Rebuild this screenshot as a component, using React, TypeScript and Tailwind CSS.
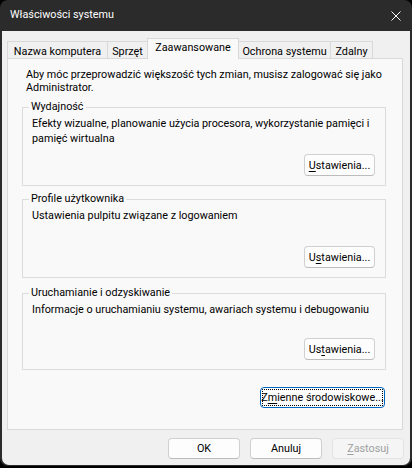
import React from 'react';

const tabs = [
  { label: 'Nazwa komputera', width: 'w-[101px]' },
  { label: 'Sprzęt', width: 'w-[41px]' },
  { label: 'Zaawansowane', width: 'w-[92px]', active: true },
  { label: 'Ochrona systemu', width: 'w-[93px]' },
  { label: 'Zdalny', width: 'w-[43px]' },
];

const Mn: React.FC<{ children: React.ReactNode }> = ({ children }) => (
  <span className="underline decoration-1 underline-offset-[2px]">{children}</span>
);

const WinButton: React.FC<{
  children: React.ReactNode;
  className?: string;
  disabled?: boolean;
  focused?: boolean;
}> = ({ children, className = '', disabled, focused }) => {
  let look = 'bg-[#fdfdfd] border-[#d0d0d0] border-b-[#bcbcbc] text-black';
  if (disabled) look = 'bg-[#f5f5f5] border-[#e3e3e3] text-[#a0a0a0]';
  if (focused) look = 'bg-[#fdfdfd] border-[#0067c0] text-black';
  return (
    <button
      className={`flex items-center justify-center whitespace-nowrap rounded-[4px] border text-[10.8px] leading-[13px] ${look} ${className}`}
    >
      {focused ? (
        <span className="flex h-full w-full items-center justify-center rounded-[2px] outline outline-1 outline-dotted outline-black -outline-offset-[2px]">
          {children}
        </span>
      ) : (
        children
      )}
    </button>
  );
};

const GroupBox: React.FC<{
  title: string;
  height: string;
  className?: string;
  children: React.ReactNode;
  button: React.ReactNode;
}> = ({ title, height, className = '', children, button }) => (
  <div className={`flex flex-col border border-[#dcdcdc] ${height} ${className}`}>
    <span className="-mt-[8px] ml-[6px] w-fit whitespace-nowrap bg-[#f9f9f9] px-[2px] leading-[13px]">{title}</span>
    <div className="mt-[3px] whitespace-nowrap pl-[9px] leading-[15px]">{children}</div>
    <WinButton className="mb-[9px] mr-[10px] mt-auto h-[22px] w-[71px] self-end">{button}</WinButton>
  </div>
);

export default function App() {
  return (
    <div className="h-[468px] w-[412px] overflow-hidden bg-black font-['Roboto','Liberation_Sans',sans-serif] text-[10.8px] text-black">
      <div className="flex h-[466px] w-[412px] flex-col overflow-hidden rounded-[8px] bg-[#2b2b2b] px-[2px] pb-px">
        {/* title bar */}
        <div className="flex h-[31px] shrink-0 items-center justify-between pl-[8px] pr-[9px]">
          <span className="text-white">Właściwości systemu</span>
          <svg width="10" height="10" viewBox="0 0 10 10">
            <path d="M0.5 0.5 L9.5 9.5 M9.5 0.5 L0.5 9.5" stroke="#ffffff" strokeWidth="1" />
          </svg>
        </div>

        <div className="flex flex-1 flex-col rounded-b-[7px] bg-[#f0f0f0] px-[5px] pt-[7px]">
          {/* tabs */}
          <div className="flex h-[20px] items-end">
            {tabs.map((tab, i) =>
              tab.active ? (
                <div
                  key={tab.label}
                  className={`relative z-10 -mb-px -ml-px h-[21px] whitespace-nowrap border border-b-0 border-[#d9d9d9] bg-[#f9f9f9] pt-[2px] text-center leading-[13px] ${tab.width}`}
                >
                  {tab.label}
                </div>
              ) : (
                <div
                  key={tab.label}
                  className={`h-[17px] whitespace-nowrap border border-b-0 border-[#d9d9d9] bg-[#f0f0f0] pt-[3px] text-center leading-[13px] ${i > 0 ? '-ml-px' : ''} ${tab.width}`}
                >
                  {tab.label}
                </div>
              )
            )}
          </div>

          {/* tab page */}
          <div className="flex h-[372px] w-[396px] flex-col border border-[#d9d9d9] bg-[#f9f9f9] pl-[14px] pr-[16px]">
            <p className="mt-[9px] whitespace-nowrap pl-[4px] leading-[13px]">
              Aby móc przeprowadzić większość tych zmian, musisz zalogować się jako
              <br />
              Administrator.
            </p>

            <GroupBox
              title="Wydajność"
              height="h-[79px]"
              className="mt-[13px]"
              button={<><Mn>U</Mn>stawienia...</>}
            >
              Efekty wizualne, planowanie użycia procesora, wykorzystanie pamięci i
              <br />
              pamięć wirtualna
            </GroupBox>

            <GroupBox
              title="Profile użytkownika"
              height="h-[79px]"
              className="mt-[13px]"
              button={<>U<Mn>s</Mn>tawienia...</>}
            >
              Ustawienia pulpitu związane z logowaniem
            </GroupBox>

            <GroupBox
              title="Uruchamianie i odzyskiwanie"
              height="h-[77px]"
              className="mt-[15px]"
              button={<>Us<Mn>t</Mn>awienia...</>}
            >
              Informacje o uruchamianiu systemu, awariach systemu i debugowaniu
            </GroupBox>

            <WinButton focused className="mr-[1px] mt-[17px] h-[21px] w-[125px] self-end">
              Z<Mn>m</Mn>ienne środowiskowe...
            </WinButton>
          </div>

          {/* dialog buttons */}
          <div className="mt-[8px] flex justify-end gap-[10px] pr-px">
            <WinButton className="h-[21px] w-[72px]">OK</WinButton>
            <WinButton className="h-[21px] w-[72px]">Anuluj</WinButton>
            <WinButton disabled className="h-[21px] w-[72px]">
              <Mn>Z</Mn>astosuj
            </WinButton>
          </div>
        </div>
      </div>
    </div>
  );
}
